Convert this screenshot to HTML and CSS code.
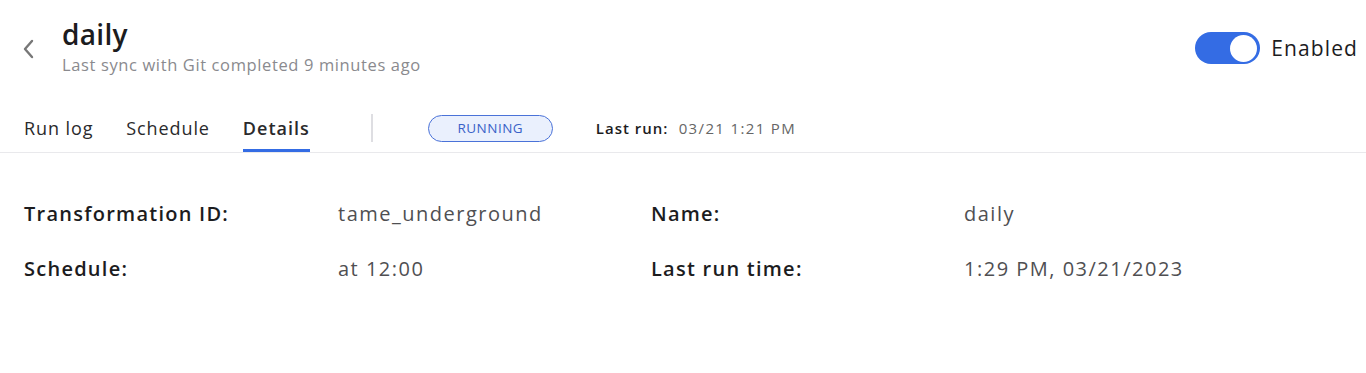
FILE: index.html
```html
<!DOCTYPE html>
<html lang="en">
<head>
  <meta charset="UTF-8" />
  <meta name="viewport" content="width=device-width, initial-scale=1.0"/>
  <title>daily - Transformation</title>
  <link rel="stylesheet" href="styles.css">
</head>
<body>
  <div class="page">
    <div class="header">
      <button class="back-btn" aria-label="Back">
        <svg width="14" height="20" viewBox="0 0 14 20"><path d="M10 2 L3 10 L10 18" fill="none" stroke="#777" stroke-width="2.4" stroke-linecap="round" stroke-linejoin="round"/></svg>
      </button>
      <div class="title-block">
        <h1>daily</h1>
        <div class="subtitle">Last sync with Git completed 9 minutes ago</div>
      </div>
      <label class="toggle-wrap">
        <span class="toggle on"><span class="knob"></span></span>
        <span class="toggle-label">Enabled</span>
      </label>
    </div>

    <div class="tabbar">
      <div class="tabs">
        <div class="tab">Run log</div>
        <div class="tab">Schedule</div>
        <div class="tab active">Details</div>
      </div>
      <div class="sep"></div>
      <span class="status">RUNNING</span>
      <div class="last-run"><strong>Last run:</strong> 03/21 1:21 PM</div>
    </div>

    <div class="details">
      <div class="label">Transformation ID:</div>
      <div class="value">tame_underground</div>
      <div class="label">Name:</div>
      <div class="value">daily</div>
      <div class="label">Schedule:</div>
      <div class="value">at 12:00</div>
      <div class="label">Last run time:</div>
      <div class="value">1:29 PM, 03/21/2023</div>
    </div>
  </div>
</body>
</html>
```

FILE: styles.css
```css
:root {
  --primary: #346ce4;
  --text: #1c1c1e;
  --muted: #8a8a8e;
  --line: #e9e9ec;
}

body {
  margin: 0;
  font-family: 'Open Sans', 'Noto Sans', sans-serif;
  color: var(--text);
  background: #fff;
}

.header {
  display: flex;
  align-items: flex-start;
  padding: 16px 8px 0 22px;
  height: 96px;
  box-sizing: border-box;
}

.back-btn {
  border: none;
  background: none;
  padding: 0;
  margin-top: 23px;
  width: 40px;
  text-align: left;
  cursor: pointer;
}

.title-block {
  flex: 1;
}

h1 {
  margin: 0;
  font-size: 28px;
  font-weight: 600;
  line-height: 36px;
  letter-spacing: 0.3px;
}

.subtitle {
  margin-top: 1px;
  font-size: 16.5px;
  letter-spacing: 0.62px;
  color: var(--muted);
}

.toggle-wrap {
  display: flex;
  align-items: center;
  gap: 11px;
  margin-top: 16px;
}

.toggle {
  width: 65px;
  height: 32px;
  border-radius: 16px;
  background: #ccc;
  display: flex;
  align-items: center;
  padding: 3px;
  box-sizing: border-box;
}

.toggle.on {
  background: var(--primary);
  justify-content: flex-end;
}

.knob {
  width: 27px;
  height: 27px;
  border-radius: 50%;
  background: #fff;
}

.toggle-label {
  font-size: 21px;
  letter-spacing: 1.1px;
}

.tabbar {
  display: flex;
  align-items: center;
  height: 56px;
  padding-left: 24px;
  border-bottom: 1px solid var(--line);
}

.tabs {
  display: flex;
  gap: 33px;
  align-self: stretch;
}

.tab {
  font-size: 18px;
  letter-spacing: 0.9px;
  color: #2a2a2c;
  display: flex;
  align-items: center;
  border-bottom: 3px solid transparent;
  box-sizing: border-box;
  padding-top: 10px;
}

.tab.active {
  font-weight: 600;
  letter-spacing: 1px;
  border-bottom-color: var(--primary);
}

.sep {
  width: 2px;
  height: 28px;
  background: #dedee2;
  margin: 8px 55px 0 61px;
}

.status {
  width: 125px;
  height: 27px;
  box-sizing: border-box;
  border: 1px solid #4a72d8;
  background: #eaf0fd;
  color: #3a62c8;
  border-radius: 14px;
  font-size: 13.5px;
  display: flex;
  align-items: center;
  justify-content: center;
  letter-spacing: 0.5px;
  margin-top: 8px;
}

.last-run {
  margin-left: 43px;
  margin-top: 8px;
  font-size: 15px;
  letter-spacing: 1.35px;
  color: #666;
}

.last-run strong {
  color: var(--text);
  font-weight: 600;
  letter-spacing: 1px;
  margin-right: 5px;
}

.details {
  display: grid;
  grid-template-columns: 314px 313px 313px auto;
  row-gap: 28px;
  padding: 47px 24px;
  font-size: 20px;
}

.label {
  font-weight: 600;
  letter-spacing: 1.25px;
}

.value {
  color: #4f4f52;
  letter-spacing: 1.5px;
}
```
